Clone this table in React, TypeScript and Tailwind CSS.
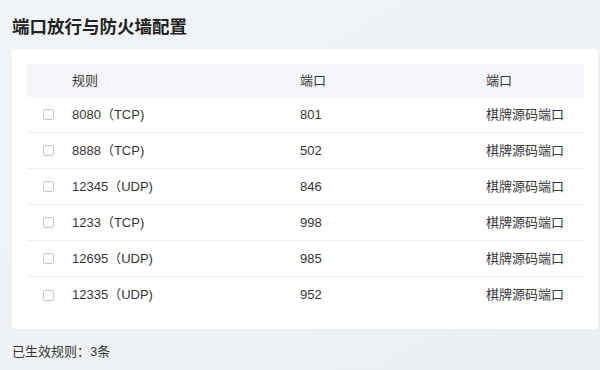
import React from 'react';

type Rule = { name: string; port: string; note: string };

const rules: Rule[] = [
  { name: '8080（TCP)', port: '801', note: '棋牌源码端口' },
  { name: '8888（TCP)', port: '502', note: '棋牌源码端口' },
  { name: '12345（UDP)', port: '846', note: '棋牌源码端口' },
  { name: '1233（TCP)', port: '998', note: '棋牌源码端口' },
  { name: '12695（UDP)', port: '985', note: '棋牌源码端口' },
  { name: '12335（UDP)', port: '952', note: '棋牌源码端口' },
];

const cols = 'grid grid-cols-[45px_228px_186px_1fr] items-center';

const App: React.FC = () => (
  <div
    className="w-[600px] h-[370px] overflow-hidden bg-gradient-to-br from-[#f1f4f7] to-[#ebeff3] pl-3 pr-[2px] text-[#363636]"
    style={{ fontFamily: '"Liberation Sans", "Noto Sans CJK SC", sans-serif' }}
  >
    <h1 className="pt-4 text-[17.5px] leading-[22px] font-semibold text-[#222] mb-[11px]">
      端口放行与防火墙配置
    </h1>

    {/* rules table card */}
    <div className="bg-white rounded pt-[15px] pb-4 pl-[15px] pr-[14px]">
      <div className={`${cols} h-[33px] bg-[#f3f5f8] text-[13px]`}>
        <span />
        <span>规则</span>
        <span>端口</span>
        <span>端口</span>
      </div>
      {rules.map((r, i) => (
        <div
          key={r.name}
          className={`${cols} h-9 text-[13px] ${i < rules.length - 1 ? 'border-b border-[#edf0f3]' : ''}`}
        >
          <span className="pl-4">
            <span className="block w-[11px] h-[11px] border border-[#c4c9d1] rounded-[2px] bg-white" />
          </span>
          <span>{r.name}</span>
          <span>{r.port}</span>
          <span>{r.note}</span>
        </div>
      ))}
    </div>

    <p className="mt-[13px] text-[13px] leading-5">已生效规则：3条</p>
  </div>
);

export default App;
